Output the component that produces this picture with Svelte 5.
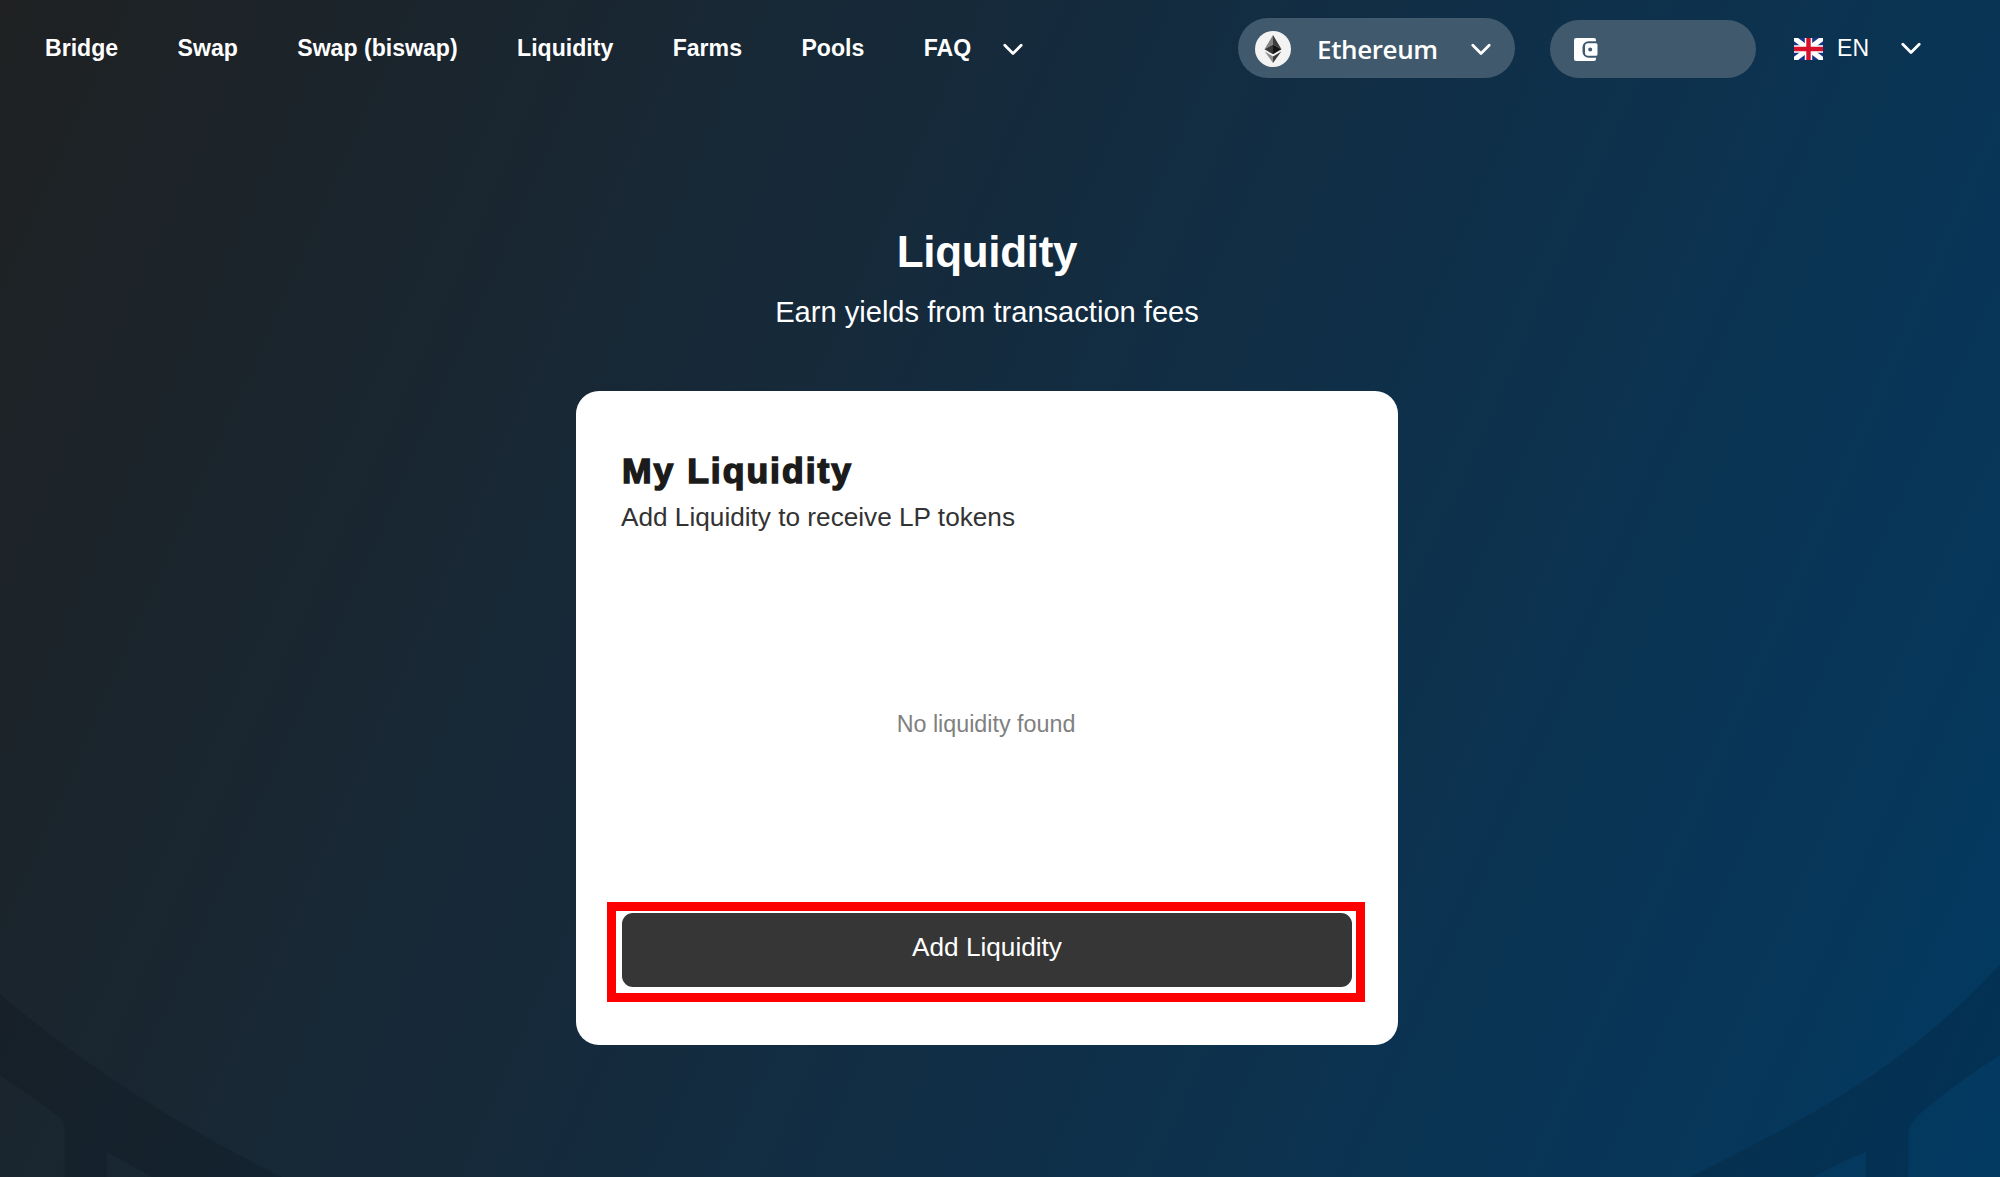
<script lang="ts">
  const links = ["Bridge", "Swap", "Swap (biswap)", "Liquidity", "Farms", "Pools", "FAQ"]
</script>

{#snippet chevron()}
  <svg class="chevron" viewBox="0 0 20 13" width="20" height="13">
    <path d="M1.8 2.2 10 10.4l8.2-8.2" fill="none" stroke="#fff" stroke-width="2.8" stroke-linecap="round" stroke-linejoin="round" />
  </svg>
{/snippet}

<div class="page">
  <svg class="backdrop" viewBox="0 0 2000 217" width="2000" height="217">
    <path
      d="M0 34Q123 139 282 217H152L107 192V217H64.5V165Q64 161 59 157Q30 135 0 115Z"
    />
    <path
      d="M2000 4Q1928 84 1826 145Q1780 172 1690 217H1814Q1842 201 1866 192V217H1908.5V172Q1909 163 1923 151Q1955 124 2000 95Z"
    />
  </svg>

  <header>
    <nav>
      {#each links as link}
        <a href="#top">{link}</a>
      {/each}
      {@render chevron()}
    </nav>

    <div class="actions">
      <button class="pill network">
        <svg class="coin" viewBox="0 0 36 36" width="36" height="36">
          <circle cx="18" cy="18" r="18" fill="#f3f3f3" />
          <path d="M18 4v9.5L9.5 18.3z" fill="#828282" />
          <path d="M18 4v9.5l8.5 4.8z" fill="#3c3c3b" />
          <path d="M18 13.5v9.8l-8.5-5z" fill="#393939" />
          <path d="M18 13.5v9.8l8.5-5z" fill="#141414" />
          <path d="M9.7 20.4 18 25.4V32z" fill="#8c8c8c" />
          <path d="M26.3 20.4 18 25.4V32z" fill="#3c3c3b" />
        </svg>
        <span>Ethereum</span>
        {@render chevron()}
      </button>

      <button class="pill wallet" aria-label="Wallet">
        <svg viewBox="0 0 24 23" width="24" height="23">
          <path
            d="M2 0H20a2 2 0 0 1 2 2v1.2H14.5a6 6 0 0 0-6 6v4.6a6 6 0 0 0 6 6H22V21a2 2 0 0 1-2 2H2a2 2 0 0 1-2-2V2a2 2 0 0 1 2-2z"
            fill="#fff"
          />
          <path
            d="M14 5.3H22a1.5 1.5 0 0 1 1.5 1.5V16.2a1.5 1.5 0 0 1-1.5 1.5H14a3 3 0 0 1-3-3V8.3a3 3 0 0 1 3-3zM16.2 9.5a2 2 0 1 0 0 4 2 2 0 0 0 0-4z"
            fill="#fff"
            fill-rule="evenodd"
          />
        </svg>
      </button>

      <div class="lang">
        <svg viewBox="0 0 29 22" width="29" height="22">
          <path d="M0 0h29v22H0z" fill="#16358a" />
          <path d="M0 0 29 22M29 0 0 22" stroke="#fff" stroke-width="5" />
          <path d="M14.5 0v22M0 11h29" stroke="#fff" stroke-width="7.4" />
          <path d="M14.5 0v22M0 11h29" stroke="#d8102c" stroke-width="4.4" />
        </svg>
        <span>EN</span>
        {@render chevron()}
      </div>
    </div>
  </header>

  <main>
    <h1>Liquidity</h1>
    <p class="lead">Earn yields from transaction fees</p>

    <section class="card">
      <h2>My Liquidity</h2>
      <p class="hint">Add Liquidity to receive LP tokens</p>
      <p class="empty">No liquidity found</p>
      <div class="highlight">
        <button class="add">Add Liquidity</button>
      </div>
    </section>
  </main>
</div>

<style>
  :global(body) {
    margin: 0;
  }
  .page {
    position: relative;
    box-sizing: border-box;
    width: 2000px;
    height: 1177px;
    overflow: hidden;
    color: #fff;
    font-family: "Liberation Sans", Arial, sans-serif;
    background: linear-gradient(114deg, #1f2122, #142b3e 45%, #033a62);
  }
  .backdrop {
    position: absolute;
    left: 0;
    bottom: 0;
    fill: rgba(0, 8, 16, 0.14);
  }
  button {
    border: 0;
    color: inherit;
    font-family: inherit;
  }
  svg {
    display: block;
    flex: none;
  }
  h1,
  h2,
  p {
    margin: 0;
  }

  header {
    position: relative;
    display: flex;
    justify-content: space-between;
    height: 96px;
    padding: 0 79px 0 45px;
  }
  nav {
    display: flex;
    align-items: center;
    gap: 59.4px;
    height: 97px;

    a {
      color: inherit;
      font-size: 23.1px;
      font-weight: bold;
      text-decoration: none;
      white-space: nowrap;
    }
    .chevron {
      margin: 2px 0 0 -28px;
    }
  }
  .actions {
    display: flex;
    align-items: center;
  }
  .pill {
    display: flex;
    align-items: center;
    box-sizing: border-box;
    border-radius: 30px;
    background: #40596d;
  }
  .network {
    width: 277px;
    height: 60px;
    padding: 2px 24px 0 17px;

    span {
      margin-left: 26px;
      font-family: "Open Sans", "Noto Sans", sans-serif;
      font-size: 26px;
      font-weight: 600;
      letter-spacing: -0.4px;
    }
    .chevron {
      margin-left: auto;
    }
  }
  .wallet {
    width: 206px;
    height: 58px;
    margin: 2px 0 0 35px;
    padding: 0 24px;
  }
  .lang {
    display: flex;
    align-items: center;
    margin: 1px 0 0 38px;
    font-size: 23px;

    span {
      margin: -1px 32px 0 14px;
    }
  }

  main {
    position: relative;
    display: flex;
    flex-direction: column;
    align-items: center;
    width: 1974px;
    padding-top: 126px;
  }
  h1 {
    font-size: 44px;
    line-height: 60px;
    letter-spacing: -0.3px;
  }
  .lead {
    margin-top: 10px;
    font-size: 29.1px;
    line-height: 40px;
  }
  .card {
    box-sizing: border-box;
    display: flex;
    flex-direction: column;
    width: 822px;
    height: 654px;
    margin-top: 58.5px;
    padding: 57px 33px 43px 31px;
    border-radius: 23px;
    color: #1b1b1b;
    background: #fff;
  }
  h2 {
    margin-left: 15px;
    font-size: 35.5px;
    line-height: 46px;
    letter-spacing: 2px;
    -webkit-text-stroke: 1.5px #1b1b1b;
  }
  .hint {
    margin: 5px 0 0 14px;
    color: #333;
    font-size: 26.2px;
    line-height: 36px;
  }
  .empty {
    margin: 174px 0 auto;
    color: #808080;
    font-size: 23.3px;
    line-height: 30px;
    text-align: center;
  }
  .highlight {
    display: flex;
    box-sizing: border-box;
    height: 100px;
    padding: 2px 4px 6px 6px;
    border: 9px solid #f00;
  }
  .add {
    flex: 1;
    padding: 0 0 4px;
    border-radius: 11px;
    color: #fff;
    font-size: 26.2px;
    background: #363636;
  }
</style>
